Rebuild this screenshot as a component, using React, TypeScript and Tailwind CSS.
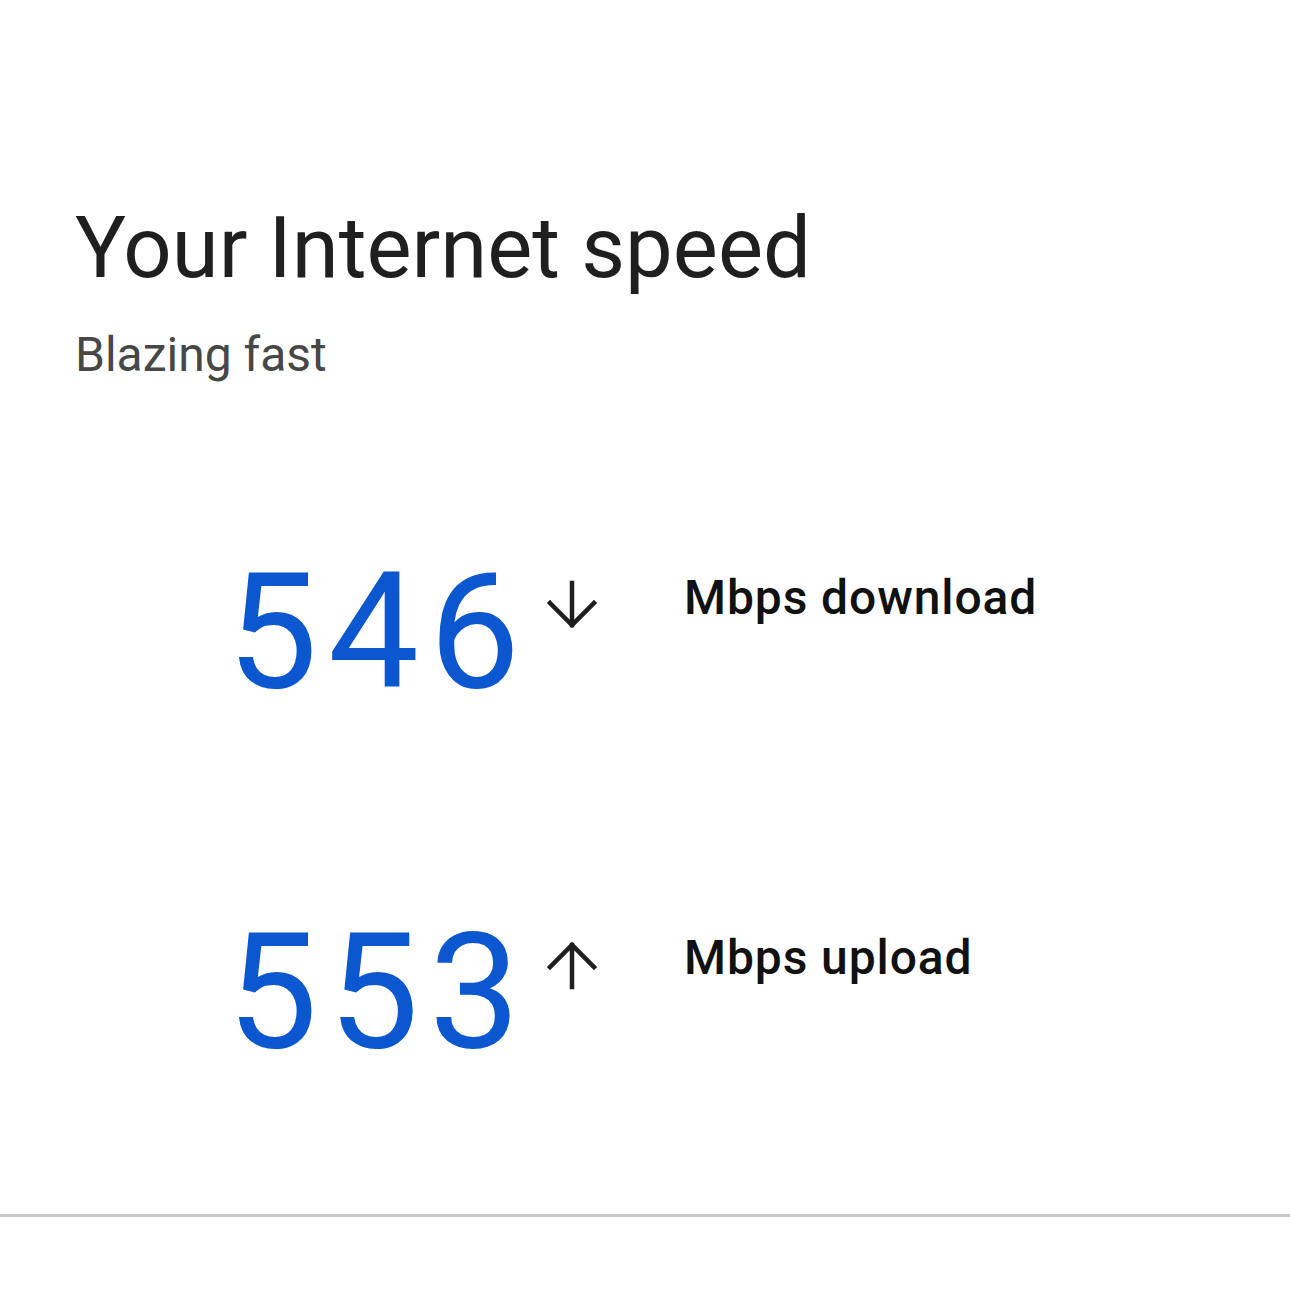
import React from "react";

function ArrowDown() {
  return (
    <svg width="52" height="52" viewBox="0 0 52 52" fill="none" stroke="#1f1f1f" strokeWidth="4.5" strokeLinecap="square">
      <path d="M26 4 L26 46" />
      <path d="M4 24 L26 46 L48 24" />
    </svg>
  );
}

function ArrowUp() {
  return (
    <svg width="52" height="52" viewBox="0 0 52 52" fill="none" stroke="#1f1f1f" strokeWidth="4.5" strokeLinecap="square">
      <path d="M26 48 L26 6" />
      <path d="M4 28 L26 6 L48 28" />
    </svg>
  );
}

function SpeedRow({ value, label, up }: { value: string; label: string; up?: boolean }) {
  return (
    <div className="flex items-start">
      <div className="w-[530px] shrink-0 text-right text-[162px] leading-none tracking-[10px] text-[#0b57d0]">
        {value}
      </div>
      <div className="ml-[16px] w-[52px] shrink-0 mt-[28px]">{up ? <ArrowUp /> : <ArrowDown />}</div>
      <div className="ml-[86px] mt-[23px] text-[48px] leading-none font-medium tracking-[0.9px] text-[#111]">
        {label}
      </div>
    </div>
  );
}

export default function App() {
  return (
    <div className="w-[1290px] h-[1308px] bg-white flex flex-col font-[Roboto,sans-serif]">
      <div className="pl-[75px] pt-[206px]">
        <h1 className="text-[85px] leading-none text-[#1f1f1f] font-normal">Your Internet speed</h1>
        <p className="mt-[40px] text-[48px] leading-none text-[#474747]">Blazing fast</p>
      </div>
      <div className="mt-[172px] flex flex-col gap-[198px]">
        <SpeedRow value="546" label="Mbps download" />
        <SpeedRow value="553" label="Mbps upload" up />
      </div>
      <div className="mt-auto mb-[91px] h-[3px] w-full bg-[#c8c8c8]" />
    </div>
  );
}
